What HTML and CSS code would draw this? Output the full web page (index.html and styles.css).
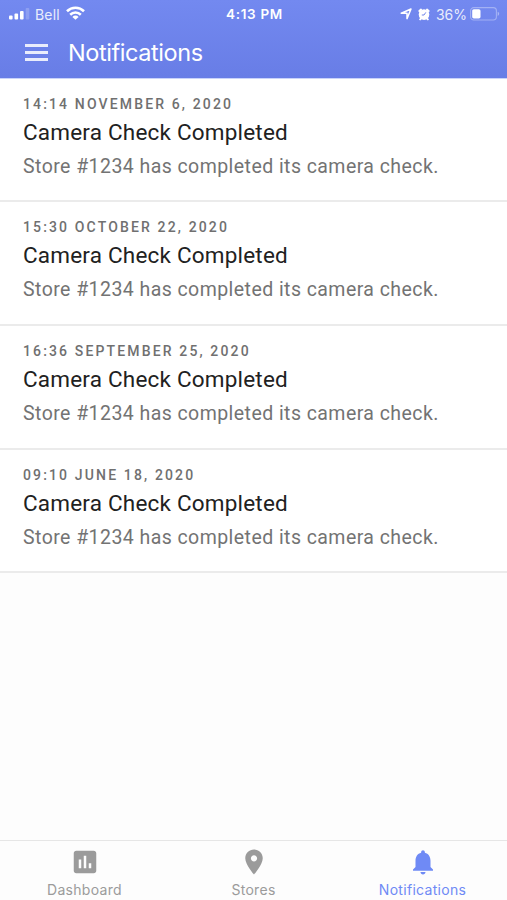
FILE: index.html
```
<!DOCTYPE html>
<html lang="en">
<head>
<meta charset="UTF-8">
<meta name="viewport" content="width=device-width, initial-scale=1">
<title>Notifications</title>
<link rel="stylesheet" href="styles.css">
</head>
<body>
<div class="app">
  <header class="header">
    <div class="status">
      <div class="status-left">
        <svg width="21" height="12" viewBox="0 0 21 12" fill="#fff">
          <rect x="0" y="7.5" width="3.6" height="4" rx="1"/>
          <rect x="5.5" y="5.5" width="3.6" height="6" rx="1"/>
          <rect x="11" y="3" width="3.6" height="8.5" rx="1"/>
          <rect x="16.7" y="0" width="3.6" height="11.5" rx="1" opacity="0.2"/>
        </svg>
        <span class="carrier">Bell</span>
        <svg class="wifi" width="19" height="14" viewBox="0 0 19 14" fill="none" stroke="#fff" stroke-width="2.6">
          <path d="M1 5.2a12.2 12.2 0 0 1 17 0"/>
          <path d="M4.2 8.7a7.6 7.6 0 0 1 10.6 0"/>
          <path d="M9.5 13.8L6.4 10.9a4.4 4.4 0 0 1 6.2 0z" fill="#fff" stroke="none"/>
        </svg>
      </div>
      <div class="clock">4:13 PM</div>
      <div class="status-right">
        <svg width="12" height="12" viewBox="0 0 12 12" fill="none" stroke="#fff" stroke-width="1.5" stroke-linejoin="round">
          <path d="M11 1L7 10.6V5.2H1.2z"/>
        </svg>
        <svg class="alarm" width="12" height="13" viewBox="0 0 12 13">
          <circle cx="6" cy="6.6" r="5.3" fill="#fff"/>
          <path d="M1.4 3L3 1.6M10.6 3L9 1.6M2.2 11.4l1-1M9.8 11.4l-1-1" stroke="#fff" stroke-width="2" stroke-linecap="round"/>
          <path d="M7.8 4.4L6 7H3.8" fill="none" stroke="#7085ea" stroke-width="1"/>
        </svg>
        <span class="percent">36%</span>
        <svg class="battery" width="30" height="14" viewBox="0 0 30 14">
          <rect x=".6" y=".6" width="25.8" height="12.4" rx="3.2" fill="none" stroke="#fff" stroke-opacity=".35" stroke-width="1.1"/>
          <rect x="2.2" y="2.2" width="8.3" height="9.2" rx="1.6" fill="#fff"/>
          <path d="M27.7 4.8c2 .7 2 3.4 0 4.1z" fill="#fff" fill-opacity=".4"/>
        </svg>
      </div>
    </div>
    <div class="toolbar">
      <button class="menu-btn" aria-label="Menu"><span></span><span></span><span></span></button>
      <h1>Notifications</h1>
    </div>
  </header>

  <main class="list">
    <article class="item">
      <div class="date">14:14 November 6, 2020</div>
      <h2>Camera Check Completed</h2>
      <p>Store #1234 has completed its camera check.</p>
    </article>
    <article class="item">
      <div class="date">15:30 October 22, 2020</div>
      <h2>Camera Check Completed</h2>
      <p>Store #1234 has completed its camera check.</p>
    </article>
    <article class="item">
      <div class="date">16:36 September 25, 2020</div>
      <h2>Camera Check Completed</h2>
      <p>Store #1234 has completed its camera check.</p>
    </article>
    <article class="item">
      <div class="date">09:10 June 18, 2020</div>
      <h2>Camera Check Completed</h2>
      <p>Store #1234 has completed its camera check.</p>
    </article>
  </main>

  <nav class="tabs">
    <a class="tab">
      <svg width="30" height="30" viewBox="0 0 24 24" fill="currentColor"><path d="M19 3H5c-1.100 0-2 .9-2 2v14c0 1.100.9 2 2 2h14c1.100 0 2-.9 2-2V5c0-1.100-.9-2-2-2zM9 17H7v-7h2v7zm4 0h-2V7h2v10zm4 0h-2v-4h2v4z"/></svg>
      <span>Dashboard</span>
    </a>
    <a class="tab">
      <svg width="30" height="30" viewBox="0 0 24 24" fill="currentColor"><path d="M12 2C8.130 2 5 5.130 5 9c0 5.250 7 13 7 13s7-7.750 7-13c0-3.870-3.130-7-7-7zm0 9.500c-1.380 0-2.500-1.120-2.500-2.500s1.120-2.500 2.500-2.500 2.500 1.120 2.500 2.500-1.120 2.500-2.500 2.500z"/></svg>
      <span>Stores</span>
    </a>
    <a class="tab active">
      <svg width="30" height="30" viewBox="0 0 24 24" fill="currentColor"><path d="M12 22c1.100 0 2-.9 2-2h-4c0 1.100.9 2 2 2zm6-6v-5c0-3.070-1.640-5.640-4.500-6.320V4c0-.83-.67-1.500-1.500-1.500s-1.500.67-1.500 1.500v.68C7.630 5.360 6 7.920 6 11v5l-2 2v1h16v-1l-2-2z"/></svg>
      <span>Notifications</span>
    </a>
  </nav>
</div>
</body>
</html>
```
FILE: styles.css
```
:root{
  --active:#6f8af5;
  --line:#e6e6e6;
  --muted:#9b9b9b;
}
*{box-sizing:border-box;}
body{margin:0;font-family:Roboto,"Liberation Sans",sans-serif;background:#fdfdfd;}
.app{display:flex;flex-direction:column;height:900px;}
.header{height:79px;background:linear-gradient(#7389f0,#687de6);color:#fff;border-bottom:1px solid #c9d3fa;}
.status{display:grid;grid-template-columns:1fr auto 1fr;align-items:center;height:28px;padding:0 7px 0 9px;font-family:Inter,"Liberation Sans",sans-serif;font-size:14px;}
.status svg{display:block;}
.status-left,.status-right{display:flex;align-items:center;}
.status-right{justify-content:flex-end;}
.carrier{margin-left:5px;letter-spacing:.2px;opacity:.85;}
.wifi{margin-left:6px;margin-top:-3px;}
.clock{font-weight:600;font-size:13.5px;letter-spacing:.7px;}
.alarm{margin-left:6px;}
.percent{margin-left:6px;opacity:.85;}
.battery{margin-left:3px;}
.toolbar{display:flex;align-items:center;height:49px;padding-left:25px;}
.menu-btn{display:flex;flex-direction:column;gap:4px;width:23px;padding:0;border:none;background:none;}
.menu-btn span{height:3px;background:#fff;opacity:.85;}
.toolbar h1{margin:0 0 0 20px;font-family:Inter,"Liberation Sans",sans-serif;font-size:23.5px;font-weight:400;letter-spacing:-.42px;}
.list{flex:1;}
.item{height:123.75px;padding:15px 23px 0;background:#fff;border-bottom:2px solid #ebebeb;}
.item:first-child{height:123px;}
.date{font-size:14px;font-weight:500;line-height:20px;letter-spacing:2.14px;text-transform:uppercase;color:#707070;}
.item h2{margin:3px 0 0;font-size:22.5px;font-weight:400;line-height:30px;letter-spacing:.2px;color:#212121;}
.item p{margin:6px 0 0;font-size:19.5px;line-height:28px;letter-spacing:.44px;color:#737373;}
.tabs{display:flex;height:60px;border-top:1px solid var(--line);}
.tab{flex:1;display:flex;flex-direction:column;align-items:center;padding-top:6px;color:var(--muted);}
.tab svg{display:block;}
.tab span{font-family:Inter,"Liberation Sans",sans-serif;font-size:14px;line-height:18px;letter-spacing:.3px;margin-top:4px;}
.tab.active{color:var(--active);}
```
